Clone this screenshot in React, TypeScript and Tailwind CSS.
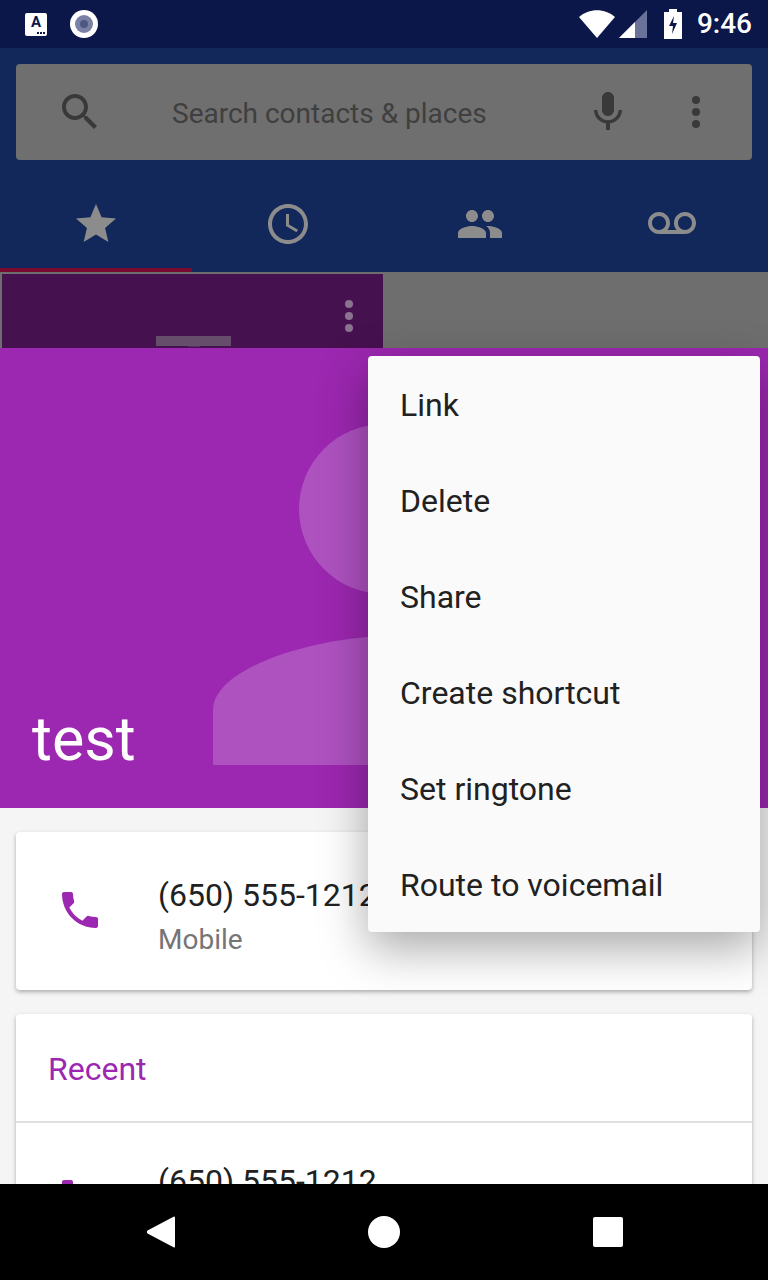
const font = { fontFamily: "Roboto, sans-serif" };

function Kebab({ className }: { className: string }) {
  return (
    <svg className={className} width="12" height="36" viewBox="0 0 12 36" fill="currentColor">
      <circle cx="6" cy="6" r="4" />
      <circle cx="6" cy="18" r="4" />
      <circle cx="6" cy="30" r="4" />
    </svg>
  );
}

function PhoneIcon({ className }: { className: string }) {
  return (
    <svg className={className} viewBox="0 0 24 24" fill="currentColor">
      <path d="M6.62 10.79c1.44 2.83 3.76 5.14 6.59 6.59l2.2-2.2c.27-.27.67-.36 1.02-.24 1.12.37 2.33.57 3.57.57.55 0 1 .45 1 1V20c0 .55-.45 1-1 1-9.39 0-17-7.61-17-17 0-.55.45-1 1-1h3.5c.55 0 1 .45 1 1 0 1.25.2 2.45.57 3.57.11.35.03.74-.25 1.02l-2.2 2.2z" />
    </svg>
  );
}

function StatusBar() {
  return (
    <div className="h-12 bg-[#0b1649] flex items-center pl-[25px] pr-4 shrink-0">
      <div className="relative w-[22px] h-[23px] bg-white rounded-[2px] flex items-start justify-center mr-[23px]">
        <span className="text-[15px] leading-[18px] font-bold text-[#0b1649]">A</span>
        <div className="absolute right-[2px] bottom-[2px] flex gap-[1px]">
          <div className="w-[2px] h-[2px] bg-[#0b1649]" />
          <div className="w-[2px] h-[2px] bg-[#0b1649]" />
          <div className="w-[2px] h-[2px] bg-[#0b1649]" />
        </div>
      </div>
      <div className="w-7 h-7 rounded-full bg-white flex items-center justify-center">
        <div className="w-[18px] h-[18px] rounded-full bg-[#7a81a6] flex items-center justify-center">
          <div className="w-2 h-2 rounded-full bg-[#4d577f]" />
        </div>
      </div>
      <div className="flex-1" />
      <svg width="36" height="28" viewBox="0 0 36 28">
        <path d="M0 7 C10 -2 26 -2 36 7 L18 28 Z" fill="#fff" />
      </svg>
      <svg width="28" height="28" viewBox="0 0 28 28" className="mr-[17px] ml-[4px]">
        <path d="M0 28 L28 0 V28 Z" fill="#6b7299" />
        <path d="M0 28 L16 12 V28 Z" fill="#fff" />
      </svg>
      <svg width="18" height="30" viewBox="0 0 18 30" className="mr-[15px]">
        <path d="M5 0 H13 V3 H18 V30 H0 V3 H5 Z" fill="#fff" />
        <path d="M10 7 L5 17 H9 L8 25 L13 14 H9 Z" fill="#0b1649" />
      </svg>
      <span className="text-[28px] leading-none font-medium text-white">9:46</span>
    </div>
  );
}

function Toolbar() {
  return (
    <div className="bg-[#12275a] shrink-0 h-[224px] flex flex-col">
      <div className="px-4 pt-4">
        <div className="h-[96px] bg-[#6f6f6f] rounded-[4px] flex items-center text-[#393939]">
          <svg width="48" height="48" viewBox="0 0 24 24" fill="currentColor" className="ml-[40px] mr-[68px] shrink-0">
            <path d="M15.5 14h-.79l-.28-.27C15.41 12.59 16 11.11 16 9.5 16 5.91 13.09 3 9.5 3S3 5.91 3 9.5 5.91 16 9.5 16c1.61 0 3.09-.59 4.23-1.57l.27.28v.79l5 4.99L20.49 19l-4.99-5zm-6 0C7.01 14 5 11.99 5 9.5S7.01 5 9.5 5 14 7.01 14 9.5 11.99 14 9.5 14z" />
          </svg>
          <span className="text-[28px] flex-1 mt-[4px] text-[#3f3f3f]">Search contacts &amp; places</span>
          <svg width="48" height="48" viewBox="0 0 24 24" fill="currentColor" className="shrink-0 mr-[58px]">
            <path d="M12 14c1.66 0 2.99-1.34 2.99-3L15 5c0-1.66-1.34-3-3-3S9 3.34 9 5v6c0 1.66 1.34 3 3 3zm5.3-3c0 3-2.54 5.1-5.3 5.1S6.7 14 6.7 11H5c0 3.41 2.72 6.23 6 6.72V21h2v-3.28c3.28-.48 6-3.3 6-6.72h-1.7z" />
          </svg>
          <Kebab className="mr-[50px] shrink-0" />
        </div>
      </div>
      <div className="flex-1 flex items-center text-[#8c8c8c] pt-[20px]">
        <div className="flex-1 flex justify-center">
          <svg width="48" height="48" viewBox="0 0 24 24" fill="currentColor">
            <path d="M12 17.27L18.18 21l-1.64-7.03L22 9.24l-7.19-.61L12 2 9.19 8.63 2 9.24l5.46 4.73L5.82 21z" />
          </svg>
        </div>
        <div className="flex-1 flex justify-center">
          <svg width="48" height="48" viewBox="0 0 24 24" fill="currentColor">
            <path d="M11.99 2C6.47 2 2 6.48 2 12s4.47 10 9.99 10C17.52 22 22 17.52 22 12S17.52 2 11.99 2zM12 20c-4.42 0-8-3.58-8-8s3.58-8 8-8 8 3.58 8 8-3.58 8-8 8zm.5-13H11v6l5.25 3.15.75-1.23-4.5-2.67z" />
          </svg>
        </div>
        <div className="flex-1 flex justify-center">
          <svg width="48" height="48" viewBox="0 0 24 24" fill="currentColor">
            <path d="M16 11c1.66 0 2.99-1.34 2.99-3S17.66 5 16 5c-1.66 0-3 1.34-3 3s1.34 3 3 3zm-8 0c1.66 0 2.99-1.34 2.99-3S9.66 5 8 5C6.34 5 5 6.34 5 8s1.34 3 3 3zm0 2c-2.33 0-7 1.17-7 3.5V19h14v-2.5c0-2.33-4.67-3.5-7-3.5zm8 0c-.29 0-.62.02-.97.05 1.16.84 1.97 1.97 1.97 3.45V19h6v-2.5c0-2.33-4.67-3.5-7-3.5z" />
          </svg>
        </div>
        <div className="flex-1 flex justify-center">
          <svg width="48" height="48" viewBox="0 0 24 24" fill="currentColor">
            <path d="M18.5 6C15.46 6 13 8.46 13 11.5c0 1.33.47 2.55 1.26 3.5H9.74C10.53 14.05 11 12.83 11 11.5 11 8.46 8.54 6 5.5 6S0 8.46 0 11.5 2.46 17 5.5 17h13c3.04 0 5.5-2.46 5.5-5.5S21.54 6 18.5 6zm-13 9C3.57 15 2 13.43 2 11.5S3.57 8 5.5 8 9 9.57 9 11.5 7.43 15 5.5 15zm13 0c-1.93 0-3.5-1.57-3.5-3.5S16.57 8 18.5 8 22 9.57 22 11.5 20.43 15 18.5 15z" />
          </svg>
        </div>
      </div>
      <div className="h-[4px] w-1/4 bg-[#7a0a30]" />
    </div>
  );
}

function Menu() {
  const items = ["Link", "Delete", "Share", "Create shortcut", "Set ringtone", "Route to voicemail"];
  return (
    <div className="absolute left-[368px] top-[356px] w-[392px] bg-[#fafafa] rounded-[4px] shadow-[0_16px_48px_rgba(0,0,0,0.35)]">
      {items.map((item) => (
        <div key={item} className="h-[96px] flex items-center pl-8 pt-[1px] text-[32px] text-[#212121]">
          {item}
        </div>
      ))}
    </div>
  );
}

export default function App() {
  return (
    <div className="relative w-[768px] h-[1280px] overflow-hidden flex flex-col bg-[#f5f5f5]" style={font}>
      <StatusBar />
      <Toolbar />
      <div className="h-[76px] bg-[#6e6e6e] shrink-0 pl-[2px] pt-[2px]">
        <div className="w-[381px] h-[74px] bg-[#46114f] relative">
          <Kebab className="absolute right-[28px] top-[24px] text-[#8b7290]" />
          <div className="absolute left-[154px] top-[62px] w-[75px] h-[10px] bg-[#654d6b]" />
          <div className="absolute left-[186px] top-[72px] w-[12px] h-[1px] bg-[#553060]" />
        </div>
      </div>
      <div className="h-[460px] bg-[#9c27b0] shrink-0 relative overflow-hidden">
        <svg className="absolute left-[213px] top-[76px]" width="342" height="342" viewBox="0 0 342 342" fill="#ae52c0">
          <circle cx="171" cy="85" r="85" />
          <path d="M0 341 V286 C0 244 100 214 171 212 C242 214 342 244 342 286 V341 Z" />
        </svg>
        <span className="absolute left-[32px] bottom-[38px] text-[61px] leading-none text-white">test</span>
      </div>
      <div className="flex-1 overflow-hidden px-4 pt-6 flex flex-col gap-6">
        <div className="h-[158px] shrink-0 bg-white rounded-[4px] shadow-[0_2px_4px_rgba(0,0,0,0.3)] flex items-center">
          <PhoneIcon className="w-12 h-12 text-[#9c27b0] ml-[40px] mr-[54px] mb-[2px] shrink-0" />
          <div className="flex flex-col pt-[13px]">
            <span className="text-[32px] leading-[45px] text-[#212121]">(650) 555-1212</span>
            <span className="text-[28px] leading-[44px] text-[#757575]">Mobile</span>
          </div>
        </div>
        <div className="shrink-0 bg-white rounded-[4px] shadow-[0_2px_4px_rgba(0,0,0,0.3)]">
          <div className="h-[109px] flex items-center pl-8 pt-[3px] text-[32px] text-[#9c27b0] border-b-2 border-[#e0e0e0]">Recent</div>
          <div className="flex items-start pt-[36px]">
            <PhoneIcon className="w-12 h-12 text-[#9c27b0] ml-[40px] mr-[54px] shrink-0 mt-[15px]" />
            <span className="text-[32px] leading-[44px] text-[#212121]">(650) 555-1212</span>
          </div>
        </div>
      </div>
      <div className="h-[96px] bg-black shrink-0 flex items-center">
        <div className="w-[368px] flex justify-end pr-[192px]">
          <svg width="30" height="34" viewBox="0 0 30 34" fill="#fff">
            <path d="M28 1.5 L1.5 15.5 Q0 17 1.5 18.5 L28 32.5 Q29 33 29 31 V3 Q29 1 28 1.5 Z" />
          </svg>
        </div>
        <div className="w-8 h-8 rounded-full bg-white" />
        <div className="w-[368px] flex pl-[193px]">
          <div className="w-[30px] h-[30px] bg-white rounded-[2px]" />
        </div>
      </div>
      <Menu />
    </div>
  );
}
